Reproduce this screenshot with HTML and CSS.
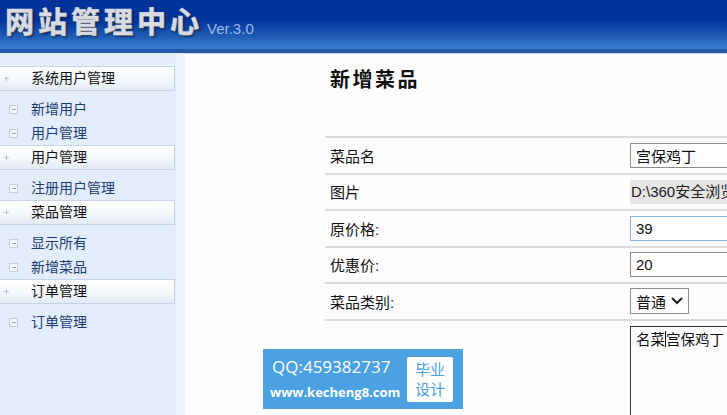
FILE: index.html
```html
<!DOCTYPE html>
<html lang="zh-CN">
<head>
    <meta charset="UTF-8">
    <meta name="viewport" content="width=device-width, initial-scale=1.0">
    <title>网站管理中心</title>
    <link rel="stylesheet" href="styles.css">
</head>
<body>
    <!-- Top banner -->
    <div class="header">
        <span class="logo">网站管理中心</span>
        <span class="version">Ver.3.0</span>
    </div>

    <div class="layout">
        <!-- Left menu -->
        <div class="sidebar">
            <div class="menu-title"><span class="plus"></span>系统用户管理</div>
            <div class="menu-item"><span class="leaf"></span>新增用户</div>
            <div class="menu-item"><span class="leaf"></span>用户管理</div>

            <div class="menu-title"><span class="plus"></span>用户管理</div>
            <div class="menu-item"><span class="leaf"></span>注册用户管理</div>

            <div class="menu-title"><span class="plus"></span>菜品管理</div>
            <div class="menu-item"><span class="leaf"></span>显示所有</div>
            <div class="menu-item"><span class="leaf"></span>新增菜品</div>

            <div class="menu-title"><span class="plus"></span>订单管理</div>
            <div class="menu-item"><span class="leaf"></span>订单管理</div>
        </div>

        <!-- Main content -->
        <div class="main">
            <h1>新增菜品</h1>
            <div class="form">
                <div class="row">
                    <label>菜品名</label>
                    <input type="text" class="field" value="宫保鸡丁">
                </div>
                <div class="row">
                    <label>图片</label>
                    <div class="file">D:\360安全浏览器下载\gongbao.jpg</div>
                </div>
                <div class="row">
                    <label>原价格:</label>
                    <input type="text" class="field focus" value="39">
                </div>
                <div class="row">
                    <label>优惠价:</label>
                    <input type="text" class="field" value="20">
                </div>
                <div class="row">
                    <label>菜品类别:</label>
                    <div class="select">普通
                        <svg width="14" height="10" viewBox="0 0 14 10"><path d="M2 2 L7 7 L12 2" fill="none" stroke="#222" stroke-width="2.2"/></svg>
                    </div>
                </div>
                <div class="row tall">
                    <label></label>
                    <div class="textarea">名菜<span class="caret"></span>宫保鸡丁</div>
                </div>
            </div>
        </div>
    </div>

    <!-- Watermark badge -->
    <div class="badge">
        <div class="badge-text">
            <div class="qq">QQ:459382737</div>
            <div class="site">www.kecheng8.com</div>
        </div>
        <div class="badge-box">毕业<br>设计</div>
    </div>
</body>
</html>
```

FILE: styles.css
```css
body {
    margin: 0;
    padding: 0;
    width: 727px;
    height: 415px;
    overflow: hidden;
    font-family: "Liberation Sans", "Noto Sans CJK SC", sans-serif;
    background: #fdfdff;
    position: relative;
}

.header {
    height: 49px;
    background: linear-gradient(#003399 0px, #003399 20px, #1a56b0 34px, #3a80d2 49px);
    border-bottom: 4px solid #2458a8;
    box-shadow: 0 1px 0 #c8d8f0;
    display: flex;
    align-items: flex-start;
    padding-left: 5px;
}

.logo {
    font-family: "Noto Sans CJK SC", sans-serif;
    font-weight: bold;
    font-size: 29px;
    letter-spacing: 4px;
    line-height: 36px;
    margin-top: 2px;
    color: #d8dbe2;
    -webkit-text-stroke: 0.6px #d8dbe2;
    text-shadow: 1px 1px 0 #4a4f5a, 2px 2px 2px rgba(0, 0, 0, 0.45);
}

.version {
    font-size: 15px;
    color: #9cbbe8;
    margin-top: 20px;
    margin-left: 4px;
}

.layout {
    display: flex;
    height: 362px;
}

.sidebar {
    width: 176px;
    padding-top: 13px;
    background: #e3edfb;
    border-right: 9px solid #ebf2fc;
}

.menu-title {
    height: 23px;
    line-height: 23px;
    border: 1px solid #c7d4e6;
    border-left: none;
    background: linear-gradient(#ffffff, #f4f7fc 55%, #e4ebf6);
    font-size: 14px;
    color: #111;
    padding-left: 31px;
    position: relative;
    margin-right: 1px;
}

.menu-title + .menu-item {
    margin-top: 6px;
}

.plus {
    position: absolute;
    left: 4px;
    top: 9px;
    width: 5px;
    height: 5px;
    background:
        linear-gradient(#b8c4d4, #b8c4d4) center / 5px 1px no-repeat,
        linear-gradient(#b8c4d4, #b8c4d4) center / 1px 5px no-repeat;
}

.menu-item {
    height: 24px;
    line-height: 24px;
    font-size: 14px;
    color: #1d3c72;
    padding-left: 31px;
    position: relative;
}

.leaf {
    position: absolute;
    left: 9px;
    top: 8px;
    width: 7px;
    height: 7px;
    border: 1px solid #c3cfdf;
    background: linear-gradient(#9aa8bc, #9aa8bc) center / 4px 1px no-repeat #f4f7fb;
}

.main {
    flex: 1;
    padding-left: 140px;
    overflow: hidden;
}

h1 {
    margin: 14px 0 0 5px;
    font-family: "Noto Sans CJK SC", sans-serif;
    font-size: 20px;
    letter-spacing: 2.5px;
    font-weight: bold;
    color: #111;
    height: 69px;
    line-height: 24px;
}

.form {
    width: 600px;
}

.row {
    display: flex;
    align-items: center;
    height: 34.5px;
    border-top: 2px solid #dcdcdc;
}

.row label {
    width: 300px;
    padding-left: 5px;
    font-size: 15px;
    color: #111;
    flex-shrink: 0;
}

.field {
    width: 200px;
    height: 23px;
    border: 1px solid #8c8c8c;
    padding: 0 5px;
    font-family: "Liberation Sans", "Noto Sans CJK SC", sans-serif;
    font-size: 15px;
    color: #111;
    background: #fff;
    margin: 0;
}

.field.focus {
    border-color: #86b3df;
}

.file {
    height: 24px;
    line-height: 24px;
    width: 200px;
    padding-left: 1px;
    background: #e6e6e6;
    font-size: 15px;
    color: #222;
    white-space: nowrap;
}

.select {
    display: flex;
    align-items: center;
    gap: 4px;
    height: 24px;
    padding: 0 4px 0 5px;
    border: 1px solid #8c8c8c;
    font-size: 15px;
    color: #111;
    background: #fff;
}

.row.tall {
    height: 120px;
    align-items: flex-start;
    padding-top: 5px;
}

.textarea {
    width: 200px;
    height: 120px;
    border: 1px solid #333;
    padding: 3px 5px;
    font-size: 14.5px;
    color: #111;
    line-height: 20px;
    white-space: nowrap;
}

.caret {
    display: inline-block;
    width: 1px;
    height: 16px;
    background: #111;
    vertical-align: -2px;
}

.badge {
    position: absolute;
    left: 263px;
    top: 349px;
    width: 200px;
    height: 60px;
    background: #4ba1e1;
    display: flex;
    align-items: center;
    box-sizing: border-box;
    padding-left: 7px;
}

.badge-text {
    color: #fff;
    width: 137px;
}

.qq {
    font-family: "Open Sans", sans-serif;
    font-size: 17px;
    line-height: 22px;
    padding-left: 2px;
}

.site {
    font-family: "Open Sans", sans-serif;
    font-weight: bold;
    font-size: 13px;
    line-height: 20px;
    margin-top: 4px;
}

.badge-box {
    width: 46px;
    height: 45px;
    background: #fff;
    border-radius: 2px;
    color: #4ba1e1;
    font-family: "Noto Sans CJK SC", sans-serif;
    font-size: 15px;
    line-height: 20px;
    text-align: center;
    padding-top: 2px;
    box-sizing: border-box;
}
```
